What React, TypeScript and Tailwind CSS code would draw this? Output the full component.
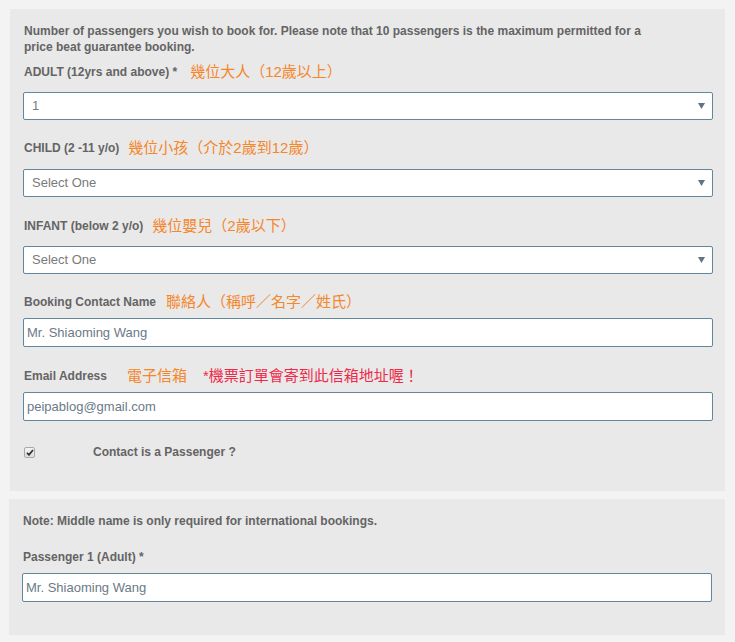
import React from 'react';

const cjk = "font-['Liberation_Sans','Noto_Sans_CJK_TC',sans-serif]";

const SelectBox: React.FC<{ value: string; className?: string }> = ({ value, className }) => (
  <div
    className={`flex h-[28px] w-[690px] items-center justify-between rounded-[2px] border border-[#62869b] bg-white pl-[8px] pr-[7px] text-[13px] text-[#7a7a7a] ${className ?? ''}`}
  >
    <span>{value}</span>
    <svg width="7" height="6" viewBox="0 0 7 6">
      <path d="M0 0h7L3.5 6z" fill="#5d7587" />
    </svg>
  </div>
);

const TextBox: React.FC<{ value: string; className?: string }> = ({ value, className }) => (
  <div
    className={`flex h-[29px] w-[690px] items-center rounded-[2px] border border-[#62869b] bg-white pl-[3px] text-[13px] text-[#6b7a88] ${className ?? ''}`}
  >
    {value}
  </div>
);

const Label: React.FC<{ text: string; children?: React.ReactNode; className?: string }> = ({ text, children, className }) => (
  <div className={`flex h-[20px] items-center pl-px ${className ?? ''}`}>
    <span className="text-[12px] font-bold text-[#646464]">{text}</span>
    {children}
  </div>
);

export default function App() {
  return (
    <div className={`min-h-[642px] w-[735px] bg-[#f3f3f3] pt-[9px] ${cjk}`}>
      <section className="ml-[10px] w-[715px] bg-[#e9e9e9] pb-[29px] pl-[13px] pt-[14px]">
        <p className="w-[640px] pl-px text-[12px] font-bold leading-[16px] text-[#646464]">
          Number of passengers you wish to book for. Please note that 10 passengers is the maximum permitted for a price beat guarantee booking.
        </p>

        <Label text="ADULT (12yrs and above) *" className="mt-[7px]">
          <span className="ml-[13px] text-[15px] text-[#f5862a]">幾位大人（12歲以上）</span>
        </Label>
        <SelectBox value="1" className="mt-[10px]" />

        <Label text="CHILD (2 -11 y/o)" className="mt-[18px]">
          <span className="ml-[9px] text-[15px] text-[#f5862a]">幾位小孩（介於2歲到12歲）</span>
        </Label>
        <SelectBox value="Select One" className="mt-[11px]" />

        <Label text="INFANT (below 2 y/o)" className="mt-[19px]">
          <span className="ml-[9px] text-[15px] text-[#f5862a]">幾位嬰兒（2歲以下）</span>
        </Label>
        <SelectBox value="Select One" className="mt-[10px]" />

        <Label text="Booking Contact Name" className="mt-[18px]">
          <span className="ml-[10px] text-[15px] text-[#f5862a]">聯絡人（稱呼／名字／姓氏）</span>
        </Label>
        <TextBox value="Mr. Shiaoming Wang" className="mt-[6px]" />

        <Label text="Email Address" className="mt-[19px]">
          <span className="ml-[20px] text-[15px] text-[#f5862a]">電子信箱</span>
          <span className="ml-[16px] text-[15px] text-[#ee2a4a]">*機票訂單會寄到此信箱地址喔！</span>
        </Label>
        <TextBox value="peipablog@gmail.com" className="mt-[6px]" />

        <div className="mt-[21px] flex h-[20px] items-center pl-px">
          <div className="flex h-[11px] w-[11px] items-center justify-center rounded-[2px] border border-[#a9a9a9] bg-gradient-to-b from-[#f4f4f4] to-[#dcdcdc]">
            <svg width="8" height="7" viewBox="0 0 8 7">
              <path d="M1 3.8 3 5.8 7 1" stroke="#333" strokeWidth="1.8" fill="none" />
            </svg>
          </div>
          <span className="ml-[58px] text-[12px] font-bold text-[#646464]">Contact is a Passenger ?</span>
        </div>
      </section>

      <section className="ml-[9px] mt-[8px] w-[716px] bg-[#e9e9e9] pb-[33px] pl-[13px] pt-[14px]">
        <p className="pl-px text-[12px] font-bold leading-[16px] text-[#646464]">
          Note: Middle name is only required for international bookings.
        </p>
        <Label text="Passenger 1 (Adult) *" className="mt-[18px]" />
        <TextBox value="Mr. Shiaoming Wang" className="mt-[6px]" />
      </section>
    </div>
  );
}
